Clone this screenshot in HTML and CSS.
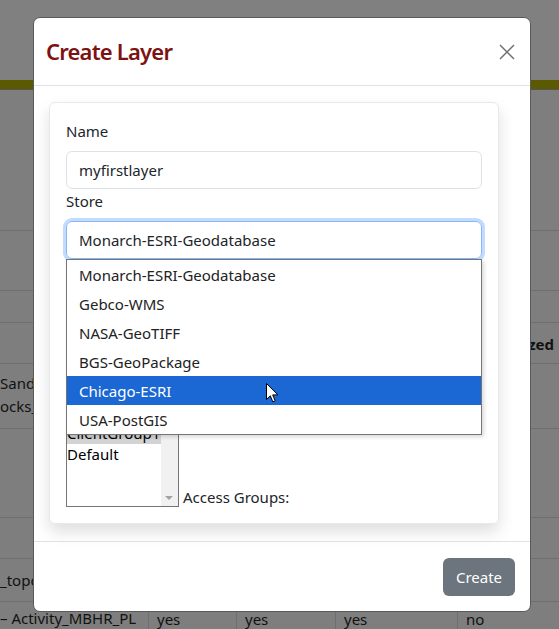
FILE: index.html
```html
<!DOCTYPE html>
<html lang="en">
<head>
<meta charset="utf-8">
<title>Create Layer</title>
<link rel="stylesheet" href="styles.css">
</head>
<body>
<div class="page">
  <div class="topbar"></div>
  <div class="band"></div>
  <div class="table">
    <div class="row r1 head"><div class="c"></div><div class="c"></div><div class="c"></div><div class="c"></div><div class="c"></div></div>
    <div class="row r2"><div class="c"></div><div class="c"></div><div class="c"></div><div class="c"></div><div class="c"></div></div>
    <div class="row r3"><div class="c"></div><div class="c"></div><div class="c"></div><div class="c"></div><div class="c"></div></div>
    <div class="row r4"><div class="c"></div><div class="c"></div><div class="c"></div><div class="c"></div><div class="c hd">Authorized</div></div>
    <div class="row r5"><div class="c txt">Sand_<br>ocks_</div><div class="c"></div><div class="c"></div><div class="c"></div><div class="c"></div></div>
    <div class="row r6"><div class="c"></div><div class="c"></div><div class="c"></div><div class="c"></div><div class="c"></div></div>
    <div class="row r7"><div class="c"></div><div class="c"></div><div class="c"></div><div class="c"></div><div class="c"></div></div>
    <div class="row r8"><div class="c txt">_topo</div><div class="c"></div><div class="c"></div><div class="c"></div><div class="c"></div></div>
    <div class="row r9"><div class="c txt dash">– Activity_MBHR_PL</div><div class="c">yes</div><div class="c">yes</div><div class="c">yes</div><div class="c">no</div></div>
  </div>
</div>

<div class="modal">
  <div class="modal-header">
    <h5 class="modal-title">Create Layer</h5>
    <button class="btn-close" aria-label="Close">
      <svg width="16" height="16" viewBox="0 0 16 16"><path d="M1 1 L15 15 M15 1 L1 15" stroke="#707070" stroke-width="1.5" fill="none"/></svg>
    </button>
  </div>
  <div class="modal-body">
    <div class="card">
      <label class="lbl">Name</label>
      <div class="input">myfirstlayer</div>
      <label class="lbl">Store</label>
      <div class="select-wrap">
        <div class="select">Monarch-ESRI-Geodatabase</div>
        <ul class="dropdown">
          <li>Monarch-ESRI-Geodatabase</li>
          <li>Gebco-WMS</li>
          <li>NASA-GeoTIFF</li>
          <li>BGS-GeoPackage</li>
          <li class="hl">Chicago-ESRI</li>
          <li>USA-PostGIS</li>
        </ul>
        <svg class="cursor" width="13" height="21" viewBox="0 0 13 21"><path d="M0.5 0.5 L0.5 16.5 L4.3 12.8 L6.8 18.8 L9.2 17.8 L6.7 11.9 L12 11.9 Z" fill="#fff" stroke="#000" stroke-width="1" stroke-linejoin="round"/></svg>
      </div>
      <div class="spacer"></div>
      <div class="groups">
        <div class="listbox">
          <div class="opts">
            <div class="opt sel">ClientGroup1</div>
            <div class="opt">Default</div>
          </div>
          <div class="sbar"><span class="arrow"></span></div>
        </div>
        <span class="glabel">Access Groups:</span>
      </div>
    </div>
  </div>
  <div class="modal-footer">
    <button class="btn">Create</button>
  </div>
</div>
</body>
</html>
```

FILE: styles.css
```css
* { box-sizing: border-box; }
html, body { margin: 0; padding: 0; }
body {
  width: 559px;
  height: 629px;
  overflow: hidden;
  background: #808080;
  font-family: "Noto Sans", "Open Sans", sans-serif;
  color: #212529;
  position: relative;
}

/* background page (seen through backdrop) */
.page { width: 559px; }
.topbar { height: 80px; background: #808080; }
.band { height: 10px; background: #5c5a00; border-bottom: 1px solid #545454; }
.table { background: #7e7e7e; }
.row {
  display: grid;
  grid-template-columns: 148px 88px 99px 122px 1fr;
  border-bottom: 1px solid #6e6e6e;
  font-size: 15px;
  color: #111;
}
.row .c { border-left: 1px solid #6e6e6e; padding: 0 8px; }
.row .c:first-child { border-left: none; padding: 0; }
.r1 { height: 141px; }
.r2 { height: 60px; }
.r3 { height: 32px; }
.r4 { height: 41px; }
.r5 { height: 65px; }
.r6 { height: 89px; }
.r7 { height: 41px; }
.r8 { height: 43px; }
.r9 { height: 40px; }
.r4 .c { border-left: none; }
.row .c.hd { font-weight: 700; text-align: right; padding-right: 5px; padding-top: 11px; }
.r5 .c.txt { padding-top: 8px; line-height: 23px; }
.r8 .c.txt { padding-top: 11px; }
.r9 .c { padding-top: 7px; }
.r9 .c.dash { padding-top: 6px; padding-left: 0; }

/* modal */
.modal {
  position: absolute;
  top: 17px;
  left: 33px;
  width: 498px;
  background: #fff;
  border: 1px solid #5a5a5a;
  border-radius: 7px;
}
.modal-header {
  display: flex;
  align-items: center;
  justify-content: space-between;
  padding: 16px 15px 16px 12px;
  border-bottom: 1px solid #dee2e6;
}
.modal-title {
  margin: 0;
  font-size: 22px;
  line-height: 35px;
  font-weight: 600;
  letter-spacing: -0.8px;
  color: #7d1212;
}
.btn-close {
  border: 0;
  background: transparent;
  padding: 0;
  width: 16px;
  height: 16px;
  display: flex;
}
.modal-body { padding: 16px 16px 17px 15px; }
.card {
  width: 450px;
  border: 1px solid #e6e8eb;
  border-radius: 6px;
  padding: 16px;
  box-shadow: 0 8px 16px rgba(0,0,0,.13);
  font-size: 15px;
}
.lbl { display: block; line-height: 24px; margin-bottom: 8px; }
.input, .select {
  height: 38px;
  border: 1px solid #dee2e6;
  border-radius: 6px;
  padding: 0 12px;
  line-height: 36px;
  color: #212529;
}
.select {
  border-color: #86b7fe;
  box-shadow: 0 0 0 3px rgba(13,110,253,.25);
}
.select-wrap { position: relative; }
.dropdown {
  position: absolute;
  top: 38px;
  left: 0;
  width: 416px;
  margin: 0;
  padding: 0;
  list-style: none;
  background: #fff;
  border: 1px solid #767676;
  box-shadow: 2px 2px 4px rgba(0,0,0,.15);
  z-index: 2;
}
.dropdown li {
  height: 29px;
  line-height: 30px;
  padding-left: 12px;
  color: #222;
}
.dropdown li.hl { background: #1b67d3; color: #fff; }
.cursor { position: absolute; top: 162px; left: 200px; z-index: 3; }
.spacer { height: 162px; }
.groups { display: flex; align-items: flex-end; }
.listbox {
  width: 113px;
  height: 86px;
  border: 1px solid #767676;
  display: flex;
  background: #fff;
}
.opts { flex: 1; padding-top: 1px; }
.opt { line-height: 21px; padding-left: 0; color: #000; }
.opt.sel { background: #d3d3d3; }
.sbar { width: 17px; background: #f1f1f1; position: relative; }
.arrow {
  position: absolute;
  bottom: 6px;
  left: 4px;
  border-left: 4px solid transparent;
  border-right: 4px solid transparent;
  border-top: 4px solid #a3a3a3;
}
.glabel { margin-left: 4px; line-height: 20px; margin-bottom: 0; }

.modal-footer {
  display: flex;
  justify-content: flex-end;
  border-top: 1px solid #dee2e6;
  padding: 16px 15px 15px;
}
.btn {
  height: 38px;
  width: 72px;
  border: 0;
  border-radius: 6px;
  background: #6c757d;
  color: #fff;
  font-family: "Noto Sans", "Open Sans", sans-serif;
  font-size: 15px;
  padding: 0;
}
```
